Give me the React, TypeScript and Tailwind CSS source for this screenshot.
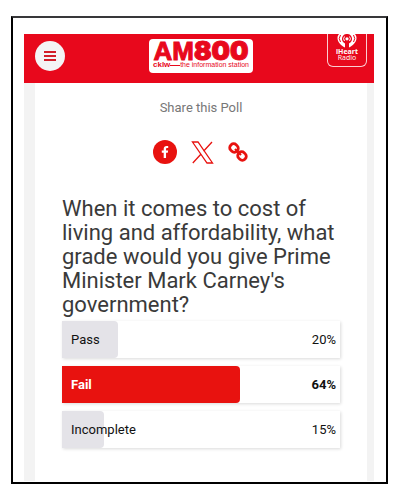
import { clsx } from "clsx";
import { FaFacebookF } from "react-icons/fa";

const results = [
  { label: "Pass", percent: 20, leading: false },
  { label: "Fail", percent: 64, leading: true },
  { label: "Incomplete", percent: 15, leading: false },
];

function StationLogo() {
  return (
    <a
      aria-label="AM800 cklw"
      className="flex h-[34px] w-[104px] flex-col justify-center rounded bg-white px-1 pb-0.5 text-[#e8081c]"
      href="#home"
    >
      <span className="flex items-center justify-center text-[26px] leading-5 font-black [-webkit-text-stroke:1px_#e8081c]">
        <span className="font-['Liberation_Sans',sans-serif]">AM</span>
        <span className="font-[Inter,sans-serif]">800</span>
      </span>
      <span className="flex items-center whitespace-nowrap font-['Liberation_Sans',sans-serif] text-[7px] leading-[8px]">
        <b className="text-[8px]">cklw</b>
        <span className="h-px flex-1 bg-[#e8081c]" />
        <span>the information station</span>
      </span>
    </a>
  );
}

function IHeartBadge() {
  return (
    <a
      className="flex h-[33px] w-10 flex-col items-center rounded-b-md border border-t-0 border-white/80 font-['Open_Sans',sans-serif] text-[7px] leading-[6px] text-white"
      href="#iheart"
    >
      <svg aria-hidden="true" className="h-[14px] w-5 shrink-0" fill="none" viewBox="0 0 20 14">
        <path
          d="M8 13.500V9.500a5 5 0 1 1 4 0v4c4-2 7.500-5.500 7.500-9.500 0-3-2-5-4-5h-11c-2 0-4 2-4 5 0 4 3.500 7.500 7.500 9.500z"
          fill="#fff"
        />
        <path d="M7.500 2.500a3.500 3.500 0 0 0 0 4.500M12.500 2.500a3.500 3.500 0 0 1 0 4.500" stroke="#fff" />
        <path d="M3.500 1a6 6 0 0 0 0 7M16.500 1a6 6 0 0 1 0 7" stroke="#e8081c" />
        <circle cx="10" cy="4.800" fill="#fff" r="1.600" />
      </svg>
      <b className="mt-px">iHeart</b>
      <span>Radio</span>
    </a>
  );
}

function ShareLinks() {
  return (
    <div className="mt-[22px] flex h-6 items-center justify-center gap-[14px] pr-0.5 text-[#e8120f]">
      <a
        aria-label="Share on Facebook"
        className="flex size-6 items-center justify-center rounded-full bg-[#e8120f] text-white"
        href="#facebook"
      >
        <FaFacebookF className="size-3" />
      </a>
      <a aria-label="Share on X" href="#x">
        <svg className="size-[23px]" fill="none" stroke="currentColor" strokeWidth="1.300" viewBox="0 0 23 23">
          <path d="M1.500 1h5.500l14.500 21h-5.500zM21 1l-8.500 9.300M10.300 12.700L1.800 22" />
        </svg>
      </a>
      <a aria-label="Copy link" href="#link">
        <svg className="size-5" fill="none" stroke="currentColor" strokeWidth="2.800" viewBox="0 0 20 20">
          <rect height="7.600" rx="3.500" transform="rotate(45 6 6)" width="8.600" x="1.700" y="2.200" />
          <rect height="7.600" rx="3.500" transform="rotate(45 14 14)" width="8.600" x="9.700" y="10.200" />
          <path d="M7 7l6 6" strokeWidth="2.200" />
        </svg>
      </a>
    </div>
  );
}

export default function App() {
  return (
    <div className="min-h-screen bg-white pt-4 pr-[13px] pb-4 pl-[11px] font-[Roboto,sans-serif]">
      <div className="border-2 border-black border-t-[#38383a] pt-4 pr-3 pb-px pl-[11px]">
        <header className="grid grid-cols-[1fr_auto_1fr] items-start bg-[#e8081c] pr-[7px] pb-[10px] pl-[11px]">
          <button
            aria-label="Menu"
            className="mt-[7px] flex size-[30px] flex-col items-center justify-center gap-0.5 rounded-full bg-[#f4f3f5]"
            type="button"
          >
            <span className="h-0.5 w-3 bg-[#d21c28]" />
            <span className="h-0.5 w-3 bg-[#d21c28]" />
            <span className="h-0.5 w-3 bg-[#d21c28]" />
          </button>
          <div className="mt-[5px]">
            <StationLogo />
          </div>
          <div className="flex justify-end">
            <IHeartBadge />
          </div>
        </header>

        <main className="border-r-[7px] border-l-[11px] border-[#f3f3f3] pt-[15px] pr-[27px] pb-[33px] pl-[27px]">
          <p className="text-center text-[13px] leading-5 text-[#777]">Share this Poll</p>
          <ShareLinks />

          <h1 className="mt-[33px] text-[22px] leading-6 text-[#3a3a3a]">
            When it comes to cost of living and affordability, what grade would you give Prime Minister Mark Carney's
            government?
          </h1>

          <ul className="mt-1 flex flex-col gap-2">
            {results.map((result) => (
              <li
                className={clsx(
                  "relative flex h-[37px] items-center justify-between pr-1 pl-[9px] text-[13px] leading-5 text-[#111] shadow-[1px_1px_3px_rgba(0,0,0,0.15)]",
                  result.leading && "font-bold",
                )}
                key={result.label}
              >
                <span
                  className={clsx(
                    "absolute inset-y-0 left-0 rounded-r",
                    result.leading ? "bg-[#e8120f]" : "bg-[#e4e3e8]",
                  )}
                  style={{ width: `${result.percent}%` }}
                />
                <span className={clsx("relative", result.leading && "text-white")}>{result.label}</span>
                <span className="relative">{result.percent}%</span>
              </li>
            ))}
          </ul>
        </main>
      </div>
    </div>
  );
}
